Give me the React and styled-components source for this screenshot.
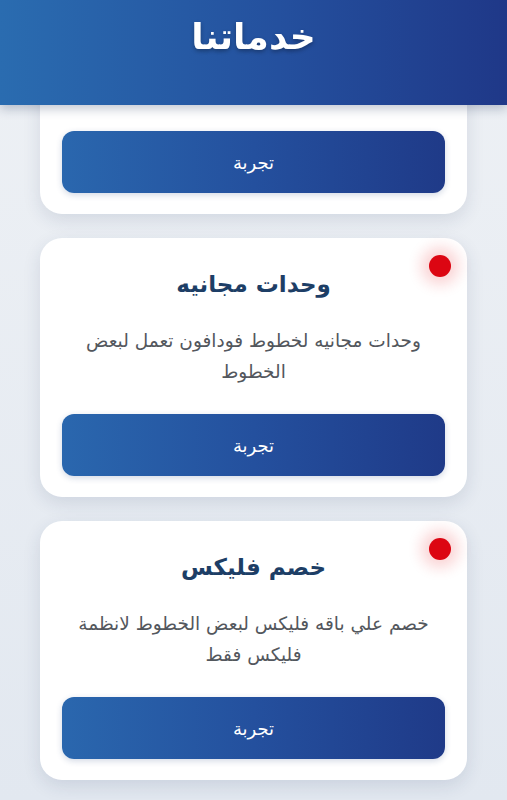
import React, { useLayoutEffect, useRef } from 'react';
import styled, { createGlobalStyle } from 'styled-components';

// first card is scrolled under the header, only its button shows
const services = [
    { id: 1 },
    { id: 2, title: 'وحدات مجانيه', text: 'وحدات مجانيه لخطوط فودافون تعمل لبعض الخطوط', dot: true },
    { id: 3, title: 'خصم فليكس', text: 'خصم علي باقه فليكس لبعض الخطوط لانظمة فليكس فقط', dot: true },
];

function ServiceCard({ title, text, dot }) {
    return (
        <Card>
            {dot && <Dot />}
            {title && <Title>{title}</Title>}
            {text && <Desc>{text}</Desc>}
            <TryButton type="button">تجربة</TryButton>
        </Card>
    );
}

export default function App() {
    const scroller = useRef(null);

    useLayoutEffect(() => {
        if (scroller.current) scroller.current.scrollTop = 174;
    }, []);

    return (
        <>
            <GlobalStyle />
            <Page ref={scroller} dir="rtl">
                <Header>
                    <HeaderTitle>خدماتنا</HeaderTitle>
                </Header>
                <List>
                    {services.map((s) => (
                        <ServiceCard key={s.id} {...s} />
                    ))}
                </List>
            </Page>
        </>
    );
}

const GlobalStyle = createGlobalStyle`
    html, body {
        margin: 0;
        padding: 0;
    }
    body {
        font-family: "DejaVu Sans", "Noto Sans", sans-serif;
        background: #e6ebf1;
    }
    * {
        box-sizing: border-box;
    }
`;

const Page = styled.div`
    height: 100vh;
    overflow-y: auto;
    scrollbar-width: none;
    background: linear-gradient(180deg, #eef1f5 0%, #e2e8f0 100%);

    &::-webkit-scrollbar {
        display: none;
    }
`;

const Header = styled.header`
    position: sticky;
    top: 0;
    z-index: 5;
    height: 105px;
    display: flex;
    justify-content: center;
    padding-top: 12px;
    background: linear-gradient(90deg, #2a6cb0 0%, #24509e 55%, #1f3888 100%);
    box-shadow: 0 4px 10px rgba(20, 40, 80, 0.25);
`;

const HeaderTitle = styled.h1`
    margin: 0;
    color: #fff;
    font-size: 36px;
    font-weight: 700;
    line-height: 50px;
    text-shadow: 0 2px 4px rgba(0, 0, 0, 0.3);
`;

const List = styled.main`
    display: flex;
    flex-direction: column;
    gap: 24px;
    padding: 24px 40px;
`;

const Card = styled.section`
    position: relative;
    height: 259px;
    display: flex;
    flex-direction: column;
    align-items: center;
    padding: 28px 22px 21px;
    background: #fff;
    border-radius: 22px;
    box-shadow: 0 6px 18px rgba(30, 50, 90, 0.12);
`;

const Dot = styled.span`
    position: absolute;
    top: 17px;
    right: 16px;
    width: 22px;
    height: 22px;
    border-radius: 50%;
    background: #dc0612;
    box-shadow: 0 0 14px 8px rgba(230, 20, 30, 0.18);
`;

const Title = styled.h2`
    margin: 0;
    color: #1d3e66;
    font-size: 23px;
    font-weight: 700;
    line-height: 36px;
`;

const Desc = styled.p`
    margin: 23px 0 0;
    color: #53575d;
    font-size: 18.5px;
    line-height: 31px;
    text-align: center;
    height: 62px;
    padding: 0 8px;
`;

const TryButton = styled.button`
    margin-top: auto;
    width: 100%;
    height: 62px;
    border: none;
    border-radius: 12px;
    color: #fff;
    font-family: inherit;
    font-size: 18px;
    background: linear-gradient(90deg, #2a67ae 0%, #24509e 50%, #1f3a88 100%);
    box-shadow: 0 2px 6px rgba(30, 60, 120, 0.2);
`;
